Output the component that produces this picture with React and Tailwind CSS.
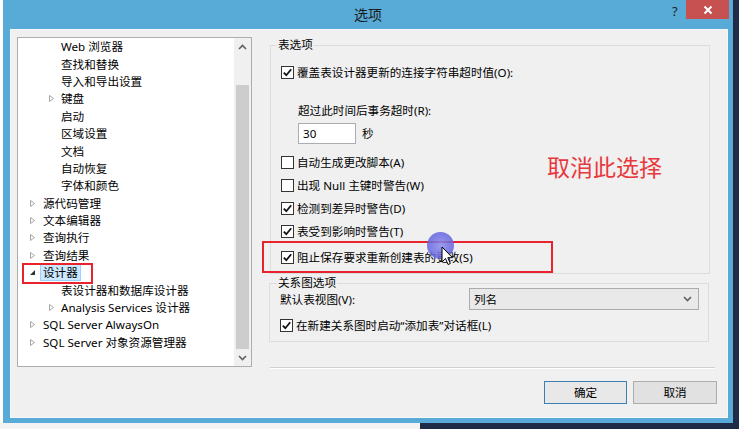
import React from 'react';

const FONT = "font-['Noto_Sans','Noto_Sans_CJK_SC',sans-serif]";

// tree rows in the options dialog (level, has children, expanded)
const TREE = [
  { label: 'Web 浏览器', level: 2 },
  { label: '查找和替换', level: 2 },
  { label: '导入和导出设置', level: 2 },
  { label: '键盘', level: 2, arrow: true },
  { label: '启动', level: 2 },
  { label: '区域设置', level: 2 },
  { label: '文档', level: 2 },
  { label: '自动恢复', level: 2 },
  { label: '字体和颜色', level: 2 },
  { label: '源代码管理', level: 1, arrow: true },
  { label: '文本编辑器', level: 1, arrow: true },
  { label: '查询执行', level: 1, arrow: true },
  { label: '查询结果', level: 1, arrow: true },
  { label: '设计器', level: 1, arrow: true, open: true, selected: true },
  { label: '表设计器和数据库设计器', level: 2 },
  { label: 'Analysis Services 设计器', level: 2, arrow: true },
  { label: 'SQL Server AlwaysOn', level: 1, arrow: true },
  { label: 'SQL Server 对象资源管理器', level: 1, arrow: true },
];

const Arrow = ({ open }) =>
  open ? (
    <svg width="9" height="9" viewBox="0 0 9 9">
      <path d="M7 2 L7 7 L2 7 Z" fill="#333" />
    </svg>
  ) : (
    <svg width="9" height="9" viewBox="0 0 9 9">
      <path d="M2.5 1.5 L6.5 4.5 L2.5 7.5 Z" fill="none" stroke="#a6a6a6" strokeWidth="1" />
    </svg>
  );

const TreeRow = ({ item }) => (
  <div className={`h-[17.4px] flex items-center ${item.level === 1 ? 'pl-[10px]' : 'pl-[29px]'}`}>
    <span className={`w-[9px] flex items-center ${item.level === 1 ? 'mr-[6px]' : 'mr-[5px]'}`}>
      {item.arrow && <Arrow open={item.open} />}
    </span>
    <span
      className={`whitespace-nowrap text-[11.6px] leading-[15px] ${
        item.selected ? 'bg-[#cce8ff] border border-[#99d1ff] px-[2px] -ml-[3px]' : ''
      }`}
    >
      {item.label}
    </span>
  </div>
);

const CheckBox = ({ checked }) => (
  <span className="w-[13px] h-[13px] border border-[#333] bg-white flex items-center justify-center shrink-0">
    {checked && (
      <svg width="11" height="11" viewBox="0 0 11 11">
        <path d="M1.8 5.6 L4.3 8.2 L9.2 2.2" fill="none" stroke="#111" strokeWidth="1.8" />
      </svg>
    )}
  </span>
);

const CheckRow = ({ checked, label, className = '' }) => (
  <div className={`h-[18px] flex items-center gap-[3px] ${className}`}>
    <CheckBox checked={checked} />
    <span className="text-[11.6px] leading-[15px] whitespace-nowrap">{label}</span>
  </div>
);

const Chevron = ({ up }) => (
  <svg width="9" height="6" viewBox="0 0 9 6">
    <path d={up ? 'M1 5 L4.5 1.5 L8 5' : 'M1 1 L4.5 4.5 L8 1'} fill="none" stroke="#606060" strokeWidth="1.6" />
  </svg>
);

export default function App() {
  return (
    <div className={`w-[739px] h-[429px] relative overflow-hidden bg-[#1f2c47] text-black ${FONT}`}>
      <div className="flex h-[423px]">
        <div className="w-[3px] bg-white" />
        <div className="w-[730px] bg-[#59abd7] flex flex-col">
          {/* title bar */}
          <div className="h-[29px] flex items-start">
            <div className="w-[61px]" />
            <div className="flex-1 text-center text-[14px] leading-[18px] pt-[6px] text-[#1a1a1a]">选项</div>
            <div className="flex items-start">
              <span className="w-[14px] text-[13px] leading-[16px] pt-[3px] text-[#222]">?</span>
              <div className="w-[43px] h-[19px] bg-[#c75050] flex items-center justify-center">
                <svg width="10" height="10" viewBox="0 0 10 10">
                  <path d="M1.5 1.5 L8.5 8.5 M8.5 1.5 L1.5 8.5" stroke="#fff" strokeWidth="2" />
                </svg>
              </div>
              <div className="w-[4px]" />
            </div>
          </div>

          {/* client area */}
          <div className="ml-[7px] mr-[5px] h-[389px] bg-[#f0f0f0] border border-[#f7f7f7] flex pt-[7px] pl-[6px]">
            {/* options tree */}
            <div className="w-[235px] h-[330px] border border-[#abadb3] bg-white flex">
              <div className="flex-1 overflow-hidden">
                {TREE.map((item) => (
                  <TreeRow key={item.label} item={item} />
                ))}
              </div>
              <div className="w-[17px] bg-[#f0f0f0] flex flex-col">
                <div className="h-[17px] flex items-center justify-center">
                  <Chevron up />
                </div>
                <div className="h-[30px]" />
                <div className="flex-1 mx-[2px] bg-[#cdcdcd]" />
                <div className="h-[17px] flex items-center justify-center">
                  <Chevron />
                </div>
              </div>
            </div>

            {/* options page */}
            <div className="ml-[18px] w-[447px] flex flex-col">
              <fieldset className="relative w-[440px] h-[237px] border border-[#dcdcdc] pl-[10px]">
                <legend className="-ml-[4px] px-[1px] text-[11.6px] leading-[16px]">表选项</legend>
                <CheckRow checked label="覆盖表设计器更新的连接字符串超时值(O):" className="mt-[10px]" />
                <div className="mt-[20px] pl-[17px] h-[18px] flex items-center text-[11.6px] leading-[15px]">
                  超过此时间后事务超时(R):
                </div>
                <div className="mt-[4px] pl-[17px] flex items-center">
                  <div className="w-[58px] h-[21px] border border-[#abadb3] bg-white text-[11.6px] leading-[19px] pl-[4px]">
                    30
                  </div>
                  <span className="ml-[6px] text-[11.6px]">秒</span>
                </div>
                <CheckRow label="自动生成更改脚本(A)" className="mt-[9px]" />
                <CheckRow label="出现 Null 主键时警告(W)" className="mt-[5px]" />
                <CheckRow checked label="检测到差异时警告(D)" className="mt-[5px]" />
                <CheckRow checked label="表受到影响时警告(T)" className="mt-[5px]" />
                <CheckRow checked label="阻止保存要求重新创建表的更改(S)" className="mt-[8px]" />
              </fieldset>

              <fieldset className="mt-[1px] -ml-[1px] w-[440px] h-[67px] border border-[#dcdcdc] pl-[10px] pr-[9px]">
                <legend className="-ml-[3px] px-[1px] text-[11.6px] leading-[16px]">关系图选项</legend>
                <div className="-mt-[3px] flex items-center">
                  <span className="text-[11.6px] leading-[15px]">默认表视图(V):</span>
                  <div className="ml-auto w-[230px] h-[22px] border border-[#acacac] bg-[#e9e9e9] flex items-center pl-[4px] pr-[6px]">
                    <span className="flex-1 text-[11.6px] leading-[15px]">列名</span>
                    <Chevron />
                  </div>
                </div>
                <CheckRow checked label="在新建关系图时启动“添加表”对话框(L)" className="mt-[6px]" />
              </fieldset>

              <div className="mt-[25px] w-[445px] h-[2px] bg-[#d0d0d0] border-b border-white" />

              <div className="mt-[12px] flex justify-end gap-[6px]">
                <button className="w-[83px] h-[23px] border border-[#3c7fb1] bg-[#e8e8e8] text-[11.6px] leading-[15px]">
                  确定
                </button>
                <button className="w-[84px] h-[23px] border border-[#adadad] bg-[#e1e1e1] text-[11.6px] leading-[15px]">
                  取消
                </button>
              </div>
            </div>
          </div>
        </div>
        <div className="w-[6px]" />
      </div>
      <div className="h-[6px] w-[420px] bg-[#f3f3f3]" />

      {/* annotation marks drawn over the dialog */}
      <div className="absolute left-[22px] top-[263px] w-[71px] h-[21px] border-2 border-[#e8232b]" />
      <div className="absolute left-[262px] top-[241px] w-[291px] h-[32px] border-2 border-[#e8232b]" />
      <div className="absolute left-[547px] top-[152px] text-[23px] leading-[30px] text-[#e8383d] whitespace-nowrap">
        取消此选择
      </div>

      {/* mouse pointer with click highlight */}
      <div className="absolute left-[427px] top-[232px] w-[27px] h-[27px] rounded-full bg-[radial-gradient(circle,#8c8cec_0%,#6a6ae2_55%,#5a5ad8_100%)] opacity-85" />
      <svg className="absolute left-[441px] top-[246px]" width="13" height="20" viewBox="0 0 13 20">
        <path d="M1 1 L1 16 L4.5 12.5 L7 18.5 L9.3 17.5 L6.8 11.7 L11.5 11.7 Z" fill="#fff" stroke="#000" strokeWidth="1" />
      </svg>
    </div>
  );
}
